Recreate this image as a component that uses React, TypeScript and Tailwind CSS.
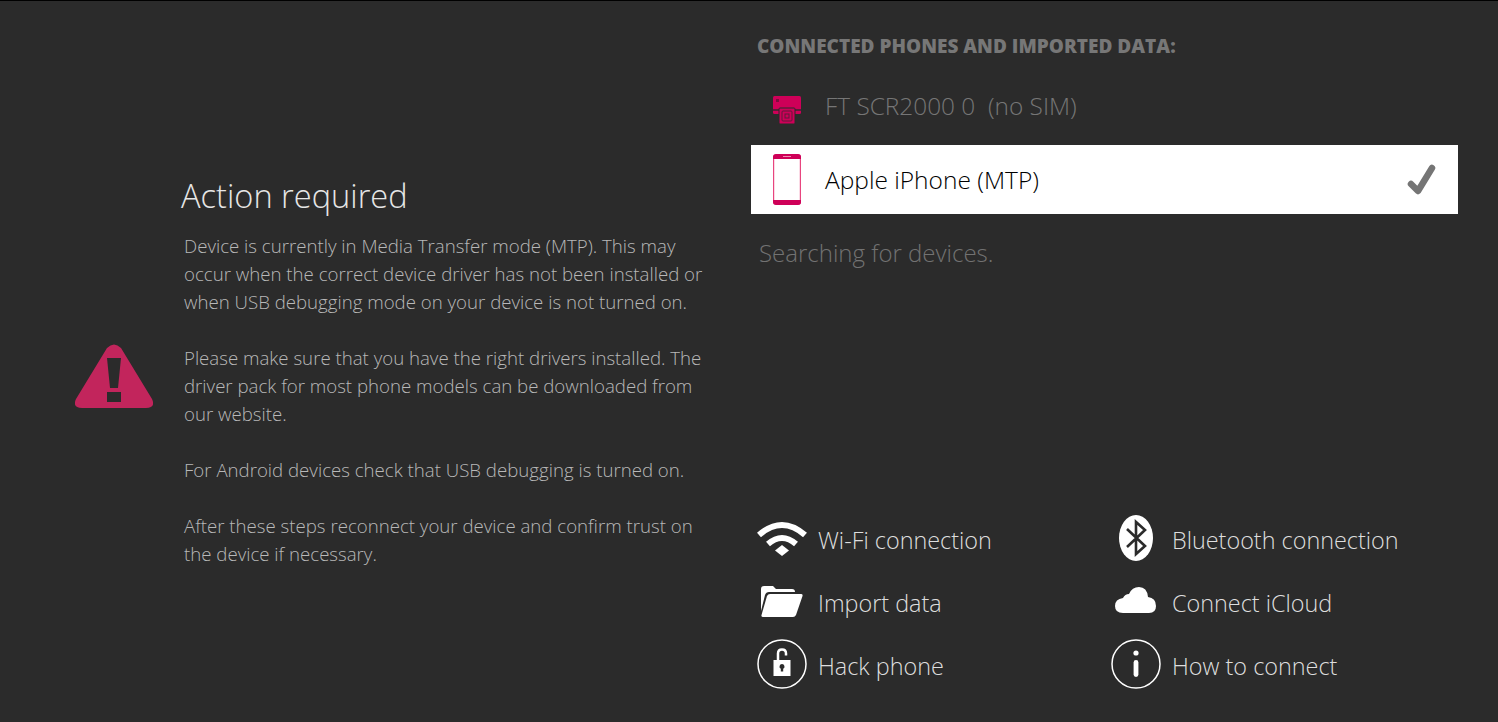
const font = "font-['Open_Sans',sans-serif]"

function WifiIcon() {
  return (
    <svg className="mb-[2px]" width="50" height="35" viewBox="0 0 50 35" fill="none" stroke="white" strokeWidth="6">
      <path d="M2 14 Q25 -6 48 14" />
      <path d="M11 23 Q25 11 39 23" />
      <path d="M25 24 L32 29.5 L25 35 L18 29.5 Z" fill="white" stroke="none" />
    </svg>
  )
}

function FolderIcon() {
  return (
    <svg className="mb-[3px]" width="42" height="31" viewBox="0 0 42 31" fill="white">
      <path d="M0 3 Q0 0 3 0 H12 L15 3 H31 Q34 3 34 6 H8 Q5 6 4 9 L0 25 Z" />
      <path d="M9 8 H40 Q42 8 41.5 10 L35 29 Q34 31 32 31 H2 Q0 31 0.5 29 L6 10 Q7 8 9 8 Z" />
    </svg>
  )
}

function LockIcon() {
  return (
    <svg className="mb-[3px]" width="50" height="50" viewBox="0 0 50 50" fill="none">
      <circle cx="25" cy="25" r="24" stroke="white" strokeWidth="1.5" />
      <path d="M21 21 V14.5 Q21 10.5 25 10.5 Q29 10.5 29 14.5 V16.5" stroke="white" strokeWidth="2.5" />
      <path fillRule="evenodd" clipRule="evenodd" fill="white" d="M16.5 21 H33.5 V37 H16.5 Z M25 25 A2.5 2.5 0 0 0 23.8 29.7 V32.5 H26.2 V29.7 A2.5 2.5 0 0 0 25 25 Z" />
    </svg>
  )
}

function BluetoothIcon() {
  return (
    <svg className="mb-[4px]" width="34" height="46" viewBox="0 0 34 46" fill="none">
      <ellipse cx="17" cy="23" rx="17" ry="23" fill="white" />
      <path d="M8 14 L26 31 L17 39 V7 L26 15 L8 32" stroke="#2b2b2b" strokeWidth="2.6" />
    </svg>
  )
}

function CloudIcon() {
  return (
    <svg className="mb-[6px]" width="42" height="26" viewBox="0 0 42 26" fill="white">
      <path d="M8 26 Q0 26 0 19 Q0 12 8 11 Q10 7 14 7 Q17 0 24 0 Q32 0 33 10 Q41 11 41 19 Q41 26 34 26 Z" />
    </svg>
  )
}

function InfoIcon() {
  return (
    <svg className="mb-[3px]" width="50" height="50" viewBox="0 0 50 50" fill="none">
      <circle cx="25" cy="25" r="24" stroke="white" strokeWidth="1.5" />
      <circle cx="25" cy="14" r="2.6" fill="white" />
      <rect x="22.6" y="21" width="4.8" height="17" rx="2.4" fill="white" />
    </svg>
  )
}

function SimIcon() {
  return (
    <svg className="mt-[1px]" width="28" height="28" viewBox="0 0 28 28">
      <rect x="0" y="0" width="28" height="18" rx="1.5" fill="#ce0058" />
      <rect x="3" y="3" width="3" height="3" fill="#7d0c3e" />
      <rect x="0" y="13" width="28" height="2" fill="#5e1a38" />
      <rect x="6" y="12" width="16" height="16" rx="1" fill="#ce0058" stroke="#2b2b2b" strokeWidth="1" />
      <rect x="9" y="15" width="10" height="10" rx="1" fill="none" stroke="#5e1a38" strokeWidth="1" />
      <rect x="12" y="18" width="4" height="4" fill="none" stroke="#5e1a38" strokeWidth="1" />
    </svg>
  )
}

function PhoneIcon() {
  return (
    <svg width="28" height="51" viewBox="0 0 28 51">
      <rect x="0.6" y="1" width="26.8" height="49" rx="2" fill="white" stroke="#e8457f" strokeWidth="1.2" />
      <path d="M0 5 V3 Q0 0 3 0 H25 Q28 0 28 3 V5 Z" fill="#ce0058" />
      <path d="M0 46 H28 V48 Q28 51 25 51 H3 Q0 51 0 48 Z" fill="#ce0058" />
      <rect x="10" y="2" width="8" height="1" fill="#f08db0" />
    </svg>
  )
}

function CheckIcon() {
  return (
    <svg width="30" height="32" viewBox="0 0 30 32" fill="none">
      <path d="M4 20 L11 27 L25 4" stroke="#757575" strokeWidth="6.5" strokeLinecap="round" strokeLinejoin="round" />
    </svg>
  )
}

function WarningIcon() {
  return (
    <svg width="78" height="64" viewBox="0 0 78 64">
      <path
        fillRule="evenodd"
        fill="#c2255c"
        d="M32 4 Q39 -3 46 4 L77 55 Q81 64 71 64 H7 Q-3 64 1 55 Z M32 14 L35 44 H43 L46 14 Z M32 48 V58 H46 V48 Z"
      />
    </svg>
  )
}

const links = [
  { icon: <WifiIcon />, label: "Wi-Fi connection" },
  { icon: <BluetoothIcon />, label: "Bluetooth connection" },
  { icon: <FolderIcon />, label: "Import data" },
  { icon: <CloudIcon />, label: "Connect iCloud" },
  { icon: <LockIcon />, label: "Hack phone" },
  { icon: <InfoIcon />, label: "How to connect" },
]

export default function App() {
  return (
    <div className={`${font} w-[1498px] h-[722px] overflow-hidden bg-[#2b2b2b] border-t border-black flex`}>
      <div className="w-[751px] shrink-0 flex items-center pl-[75px] pt-[17px]">
        <div className="w-[80px] mt-[11px] shrink-0">
          <WarningIcon />
        </div>
        <div className="ml-[26px] w-[530px]">
          <h1 className="text-[32.6px] leading-[44px] font-light text-[#e6e6e6] mt-[1px] mb-[14px]">Action required</h1>
          <div className="pl-[3px] pr-[5px] text-[18.65px] leading-[28px] font-light text-[#b8b8b8]">
            <p className="mb-[28px]">
              Device is currently in Media Transfer mode (MTP). This may occur when the correct device driver has not been installed or when USB debugging mode on your device is not turned on.
            </p>
            <p className="mb-[28px]">
              Please make sure that you have the right drivers installed. The driver pack for most phone models can be downloaded from our website.
            </p>
            <p className="mb-[28px]">For Android devices check that USB debugging is turned on.</p>
            <p>After these steps reconnect your device and confirm trust on the device if necessary.</p>
          </div>
        </div>
      </div>

      <div className="w-[707px] shrink-0 flex flex-col">
        <h2 className="pl-[6px] pt-[35px] text-[19px] leading-[20px] font-extrabold text-[#777777] whitespace-nowrap">
          CONNECTED PHONES AND IMPORTED DATA:
        </h2>
        <div className="mt-[19px] h-[68px] flex items-center pl-[22px]">
          <SimIcon />
          <span className="ml-[24px] mb-[6px] text-[24.4px] font-light text-[#767676] whitespace-pre">FT SCR2000 0  (no SIM)</span>
        </div>
        <div className="mt-[2px] h-[69px] bg-white flex items-center pl-[22px] pr-[21px]">
          <PhoneIcon />
          <span className="ml-[24px] mt-[2px] text-[24.5px] font-light text-black">Apple iPhone (MTP)</span>
          <span className="ml-auto">
            <CheckIcon />
          </span>
        </div>
        <p className="mt-[22px] pl-[8px] text-[24px] leading-[34px] font-light text-[#727272]">Searching for devices.</p>

        <div className="mt-[238px] grid grid-cols-[354px_1fr] auto-rows-[63px]">
          {links.map((link) => (
            <div key={link.label} className="pl-[6px] flex items-center text-white">
              <span className="w-[61px] flex justify-center pr-[11px]">{link.icon}</span>
              <span className="mt-[2px] text-[23.4px] font-light text-[#dedede]">{link.label}</span>
            </div>
          ))}
        </div>
      </div>
    </div>
  )
}
